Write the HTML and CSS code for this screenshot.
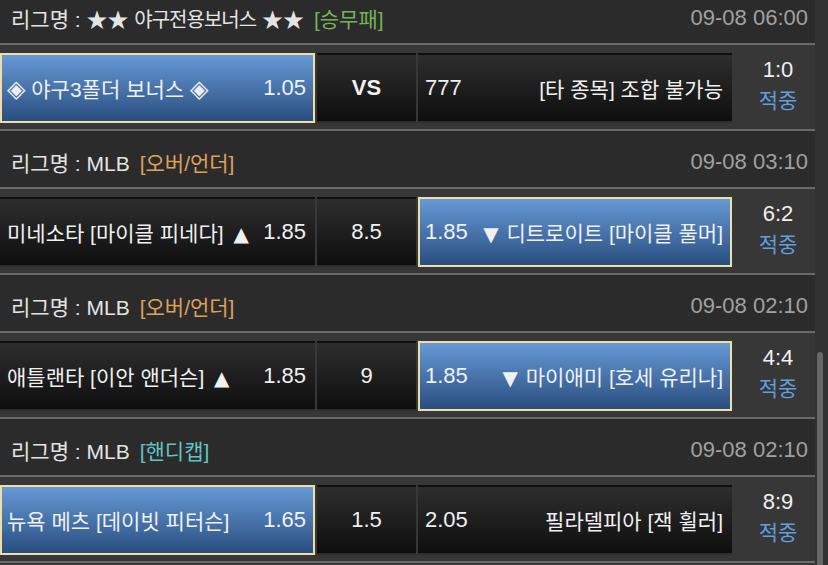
FILE: index.html
```html
<!DOCTYPE html>
<html lang="ko">
<head>
<meta charset="utf-8">
<title>Bet list</title>
<link rel="stylesheet" href="styles.css">
</head>
<body>
<div class="screen">
  <div class="list">
    <section class="game">
      <div class="league">
        <div class="league-name">리그명 : <span class="star">★★</span> <span class="title">야구전용보너스</span> <span class="star">★★</span><span class="type win">[승무패]</span></div>
        <div class="date">09-08 06:00</div>
      </div>
      <div class="row">
        <div class="cell side picked"><span class="name"><span class="dia">◈</span> 야구3폴더 보너스 <span class="dia">◈</span></span><span class="odd">1.05</span></div>
        <div class="cell mid"><span class="vs">VS</span></div>
        <div class="cell side"><span class="odd">777</span><span class="name">[타 종목] 조합 불가능</span></div>
        <div class="result"><span class="score">1:0</span><span class="hit">적중</span></div>
      </div>
    </section>
    <section class="game">
      <div class="league">
        <div class="league-name">리그명 : MLB<span class="type ou">[오버/언더]</span></div>
        <div class="date">09-08 03:10</div>
      </div>
      <div class="row">
        <div class="cell side"><span class="name">미네소타 [마이클 피네다] <span class="tri">▲</span></span><span class="odd">1.85</span></div>
        <div class="cell mid"><span class="odd">8.5</span></div>
        <div class="cell side picked"><span class="odd">1.85</span><span class="name"><span class="tri down">▼</span> 디트로이트 [마이클 풀머]</span></div>
        <div class="result"><span class="score">6:2</span><span class="hit">적중</span></div>
      </div>
    </section>
    <section class="game">
      <div class="league">
        <div class="league-name">리그명 : MLB<span class="type ou">[오버/언더]</span></div>
        <div class="date">09-08 02:10</div>
      </div>
      <div class="row">
        <div class="cell side"><span class="name">애틀랜타 [이안 앤더슨] <span class="tri">▲</span></span><span class="odd">1.85</span></div>
        <div class="cell mid"><span class="odd">9</span></div>
        <div class="cell side picked"><span class="odd">1.85</span><span class="name"><span class="tri down">▼</span> 마이애미 [호세 유리나]</span></div>
        <div class="result"><span class="score">4:4</span><span class="hit">적중</span></div>
      </div>
    </section>
    <section class="game">
      <div class="league">
        <div class="league-name">리그명 : MLB<span class="type hc">[핸디캡]</span></div>
        <div class="date">09-08 02:10</div>
      </div>
      <div class="row">
        <div class="cell side picked"><span class="name">뉴욕 메츠 [데이빗 피터슨]</span><span class="odd">1.65</span></div>
        <div class="cell mid"><span class="odd">1.5</span></div>
        <div class="cell side"><span class="odd">2.05</span><span class="name">필라델피아 [잭 휠러]</span></div>
        <div class="result"><span class="score">8:9</span><span class="hit">적중</span></div>
      </div>
    </section>
  </div>
  <div class="scrollbar"><div class="thumb"></div></div>
</div>
</body>
</html>
```
FILE: styles.css
```css
* { box-sizing: border-box; }
html, body { margin: 0; padding: 0; }
body {
  background: #373737;
  font-family: "Liberation Sans", Arial, "Noto Sans CJK KR", "DejaVu Sans", sans-serif;
  color: #f0f0f0;
}
.screen {
  display: flex;
  width: 828px;
  height: 565px;
  overflow: hidden;
}
.list {
  width: 815px;
  flex: none;
  margin-top: -13px;
}
.league {
  height: 58px;
  display: flex;
  align-items: center;
  justify-content: space-between;
  padding: 6px 7px 0 11px;
  background: #2b2b2b;
  border-bottom: 2px solid #6a6a6a;
}
.league-name {
  font-size: 21px;
  color: #e4e4e4;
  white-space: nowrap;
}
.title {
  font-size: 20px;
  letter-spacing: -1px;
}
.star {
  font-family: "Noto Sans CJK KR", sans-serif;
  font-size: 21px;
  line-height: 1;
}
.dia {
  font-family: "DejaVu Sans", sans-serif;
  font-size: 24px;
  line-height: 1;
}
.tri {
  font-family: "DejaVu Sans", sans-serif;
  font-size: 20px;
  line-height: 1;
  margin-left: 4px;
}
.tri.down { margin-left: 0; margin-right: 2px; }
.type { margin-left: 10px; }
.type.win { color: #74b258; }
.type.ou { color: #dda158; }
.type.hc { color: #62c2c4; }
.date {
  font-size: 22px;
  color: #a0a0a0;
}
.row {
  height: 86px;
  display: flex;
  align-items: flex-start;
  padding-top: 8px;
  background: #373737;
  border-bottom: 2px solid #6a6a6a;
}
.cell {
  height: 70px;
  display: flex;
  align-items: center;
  justify-content: space-between;
  border: 2px solid transparent;
  background: linear-gradient(#2e2e2e, #0e0e0e);
  white-space: nowrap;
}
.cell.side {
  width: 315px;
  padding: 0 7px 0 5px;
}
.cell.side + .cell.mid { margin-left: 2px; }
.cell.mid {
  width: 99px;
  justify-content: center;
  margin-right: 2px;
}
.cell.picked {
  background: linear-gradient(#6699d6, #2a4e80);
  border-color: #ece0a6;
}
.row > .cell.side:nth-child(3) { width: 314px; }
.name { font-size: 21px; }
.odd { font-size: 22px; }
.vs {
  font-size: 22px;
  font-weight: bold;
}
.result {
  width: 83px;
  height: 70px;
  display: flex;
  flex-direction: column;
  align-items: center;
  justify-content: center;
  padding: 0 0 6px 9px;
}
.score {
  font-size: 22px;
  line-height: 31px;
}
.hit {
  font-size: 21px;
  line-height: 31px;
  color: #5f9ddb;
}
.scrollbar {
  width: 13px;
  flex: none;
  background: #323232;
  padding-top: 352px;
}
.thumb {
  width: 6px;
  height: 260px;
  margin-left: 2px;
  border-radius: 3px;
  background: #686868;
}
```
